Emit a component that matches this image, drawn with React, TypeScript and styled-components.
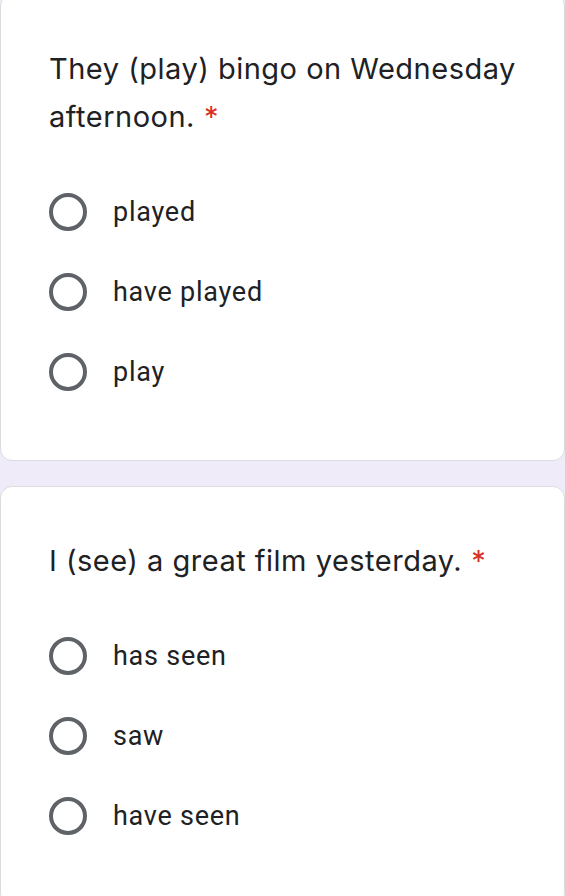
import React from "react";
import styled, { createGlobalStyle } from "styled-components";

const Global = createGlobalStyle`
  html, body { margin: 0; padding: 0; background: #efebf8; }
  body { width: 565px; height: 896px; overflow: hidden; }
`;

const Page = styled.div`
  display: flex;
  flex-direction: column;
  gap: 25px;
  margin-top: -6px;
`;

const Card = styled.section`
  background: #ffffff;
  border: 1px solid #dadce0;
  border-radius: 12px;
  padding: 50px 20px 48px 48px;
  display: flex;
  flex-direction: column;
  gap: 31px;
`;

const Title = styled.h2`
  margin: 0;
  font-family: Inter, "Open Sans", sans-serif;
  font-weight: 400;
  font-size: 29px;
  line-height: 48px;
  color: #202124;
  letter-spacing: 0.5px;
`;

const Required = styled.span`
  color: #d93025;
  margin-left: 9px;
`;

const Options = styled.div`
  display: flex;
  flex-direction: column;
`;

const OptionRow = styled.label`
  display: flex;
  align-items: center;
  height: 80px;
  gap: 26px;
`;

const Radio = styled.span`
  box-sizing: border-box;
  width: 38px;
  height: 38px;
  border-radius: 50%;
  border: 4px solid #5f6368;
  flex: none;
`;

const OptionText = styled.span`
  font-family: Roboto, "Liberation Sans", sans-serif;
  font-size: 27px;
  color: #202124;
  letter-spacing: 0.75px;
`;

const questions = [
  { title: "They (play) bingo on Wednesday afternoon.", options: ["played", "have played", "play"] },
  { title: "I (see) a great film yesterday.", options: ["has seen", "saw", "have seen"] },
];

export default function App() {
  return (
    <>
      <Global />
      <Page>
        {questions.map((q) => (
          <Card key={q.title}>
            <Title>
              {q.title}
              <Required>*</Required>
            </Title>
            <Options>
              {q.options.map((o) => (
                <OptionRow key={o}>
                  <Radio />
                  <OptionText>{o}</OptionText>
                </OptionRow>
              ))}
            </Options>
          </Card>
        ))}
      </Page>
    </>
  );
}
